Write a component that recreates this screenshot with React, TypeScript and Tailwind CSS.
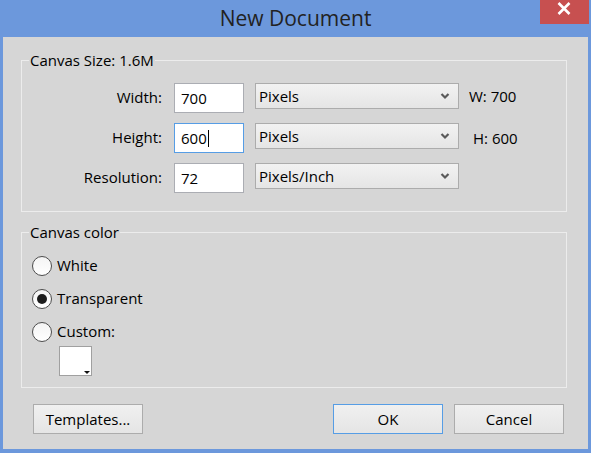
import React from "react";

function Chevron() {
  return (
    <svg width="10" height="8" viewBox="0 0 10 8" className="block">
      <path d="M1.5 2 L5 5.5 L8.5 2" fill="none" stroke="#5a5a5a" strokeWidth="2.2" strokeLinecap="butt" strokeLinejoin="miter" />
    </svg>
  );
}

function Select({ value }: { value: string }) {
  return (
    <div className="ml-[11px] w-[204px] h-[26px] border border-[#acacac] bg-gradient-to-b from-[#f2f2f2] to-[#e5e5e5] flex items-center justify-between pl-[3px] pr-[8px]">
      <span className="leading-[24px]">{value}</span>
      <Chevron />
    </div>
  );
}

function Row({
  label,
  value,
  focus,
  unit,
  extra,
  extraClass,
}: {
  label: string;
  value: string;
  focus?: boolean;
  unit: string;
  extra?: string;
  extraClass?: string;
}) {
  return (
    <div className="flex items-start h-[30px]">
      <div className="w-[140px] text-right leading-[30px] mt-[-1px]">{label}</div>
      <div
        className={
          "ml-[12px] w-[70px] h-[30px] bg-white border flex items-center pl-[6px] " +
          (focus ? "border-[#569de5]" : "border-[#abadb3]")
        }
      >
        <span className="leading-[28px]">{value}</span>
        {focus && <span className="inline-block w-[1px] h-[17px] bg-black ml-[1px]" />}
      </div>
      <Select value={unit} />
      {extra && <div className={extraClass}>{extra}</div>}
    </div>
  );
}

function Radio({ label, checked }: { label: string; checked?: boolean }) {
  return (
    <div className="flex items-center">
      <div className="ml-[10px] w-[20px] h-[20px] rounded-full border border-[#4d4d4d] bg-gradient-to-b from-[#f4f4f4] to-[#ffffff] flex items-center justify-center">
        {checked && <div className="w-[10px] h-[10px] rounded-full bg-[#1c1c1c]" />}
      </div>
      <span className="ml-[5px]">{label}</span>
    </div>
  );
}

function Button({ label, primary, className }: { label: string; primary?: boolean; className?: string }) {
  return (
    <div
      className={
        "w-[110px] h-[30px] border bg-gradient-to-b from-[#f0f0f0] to-[#e5e5e5] flex items-center justify-center " +
        (primary ? "border-[#569de5] " : "border-[#acacac] ") +
        (className || "")
      }
    >
      {label}
    </div>
  );
}

export default function App() {
  return (
    <div className="w-[591px] h-[453px] bg-[#6c98dc] flex flex-col font-['Open_Sans',sans-serif] text-[15px] text-[#000] overflow-hidden">
      <div className="h-[37px] relative flex items-center justify-center">
        <span className="text-[21px] text-[#222] leading-[28px] mt-[-2px]">New Document</span>
        <div className="absolute right-[2px] top-0 w-[49px] h-[24px] bg-[#c75050] flex justify-center pt-[2px]">
          <svg width="14" height="13" viewBox="0 0 14 13" className="block ml-[-2px]">
            <path d="M1.5 1 L12.5 12 M12.5 1 L1.5 12" stroke="#fff" strokeWidth="2.6" />
          </svg>
        </div>
      </div>
      <div className="flex-1 mx-[3px] mb-[4px] bg-[#d6d6d6] flex flex-col px-[18px]">
        <fieldset className="mt-[13px] w-[546px] border border-[#ececec]">
          <legend className="ml-[7px] px-[1px] leading-[20px]">Canvas Size: 1.6M</legend>
          <div className="pt-[13px] pb-[18px] flex flex-col gap-[10px]">
            <Row label="Width:" value="700" unit="Pixels" extra="W: 700" extraClass="ml-[10px] leading-[26px]" />
            <Row label="Height:" value="600" focus unit="Pixels" extra="H: 600" extraClass="ml-[14px] leading-[30px]" />
            <Row label="Resolution:" value="72" unit="Pixels/Inch" />
          </div>
        </fieldset>
        <fieldset className="mt-[10px] w-[546px] border border-[#ececec]">
          <legend className="ml-[7px] px-[1px] leading-[20px]">Canvas color</legend>
          <div className="pt-[7px] pb-[11px] flex flex-col">
            <div className="h-[33px] flex items-center">
              <Radio label="White" />
            </div>
            <div className="h-[33px] flex items-center">
              <Radio label="Transparent" checked />
            </div>
            <div className="h-[33px] flex items-center">
              <Radio label="Custom:" />
            </div>
            <div className="mt-[-2px] ml-[37px] w-[33px] h-[30px] bg-white border border-[#a0a0a0] relative">
              <div className="absolute right-[1px] bottom-[1px] w-0 h-0 border-l-[3px] border-r-[3px] border-t-[3px] border-l-transparent border-r-transparent border-t-[#111]" />
            </div>
          </div>
        </fieldset>
        <div className="mt-[16px] flex items-start">
          <Button label="Templates..." className="ml-[12px]" />
          <Button label="OK" primary className="ml-[190px]" />
          <Button label="Cancel" className="ml-[11px]" />
        </div>
      </div>
    </div>
  );
}
